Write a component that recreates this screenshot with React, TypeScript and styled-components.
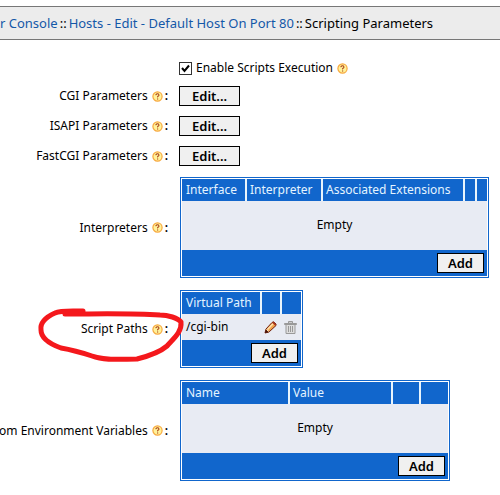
import React from "react";
import styled, { createGlobalStyle } from "styled-components";

const blue = "#1166cc";

const GlobalStyle = createGlobalStyle`
  * { box-sizing: border-box; }
  body {
    margin: 0;
    background: #fff;
    color: #000;
    font: 12px/16px "Noto Sans", "Open Sans", sans-serif;
    overflow: hidden;
  }
`;

const Page = styled.div`
  padding-top: 6px;
`;

const Breadcrumbs = styled.nav`
  display: flex;
  gap: 2px;
  padding: 8px 0;
  border-top: 1px solid #777;
  border-bottom: 1px solid #777;
  background: #ececec;
  font-size: 13px;
  white-space: nowrap;
`;

const Crumb = styled.a`
  color: #1458a8;
  text-decoration: none;
`;

const Form = styled.form`
  display: flex;
  flex-direction: column;
  gap: 11px;
  padding-top: 20px;
`;

const Group = styled.div<{ $gap: number }>`
  display: flex;
  flex-direction: column;
  gap: ${(p) => p.$gap}px;
`;

const Row = styled.div<{ $indent: number }>`
  display: grid;
  grid-template-columns: 168px 1fr;
  column-gap: ${(p) => p.$indent}px;
  align-items: center;
  justify-items: start;
`;

const LabelCell = styled.div`
  position: relative;
  display: flex;
  align-items: center;
  align-self: stretch;
  justify-self: stretch;
  justify-content: flex-end;
  gap: 4px;
  white-space: nowrap;
`;

const Colon = styled.span`
  font-weight: 600;
  margin-left: -2px;
`;

const CheckLine = styled.div`
  display: flex;
  align-items: center;
  gap: 4px;
  grid-column: 2;
`;

const Checkbox = styled.input`
  appearance: none;
  width: 13px;
  height: 13px;
  margin: 0;
  border: 1px solid #333;
  background: #fff
    url("data:image/svg+xml,%3Csvg xmlns='http://www.w3.org/2000/svg' viewBox='0 0 11 11'%3E%3Cpath d='M2 5l2.5 3L9 2.5' fill='none' stroke='black' stroke-width='2'/%3E%3C/svg%3E");
`;

const Button = styled.button<{ $pad?: number }>`
  height: 20px;
  padding: 0 ${(p) => p.$pad ?? 10}px;
  border: 1px solid #000;
  border-radius: 0;
  background: #f0f0f0;
  color: #000;
  font: 600 13px/16px "Noto Sans", "Open Sans", sans-serif;
`;

const Table = styled.table`
  padding: 1px;
  border: 1px solid ${blue};
  border-spacing: 0;
  table-layout: fixed;
  width: min-content;
`;

const Head = styled.th<{ $width: number }>`
  width: ${(p) => p.$width}px;
  height: 22px;
  padding: 3px 0 3px 4px;
  background: ${blue};
  color: #e4f4ff;
  font-weight: 400;
  text-align: left;
  white-space: nowrap;

  & + & {
    padding-left: 3px;
    border-left: 2px solid #e8f4fc;
  }
`;

const EmptyCell = styled.td`
  padding: 16px 0 17px;
  background: #e8ebf3;
  text-align: center;
`;

const Cell = styled.td`
  height: 26px;
  padding: 0 0 0 4px;
  background: #e8ebf3;
`;

const FootCell = styled.td`
  padding: 3px;
  background: ${blue};
  text-align: right;

  ${Button} {
    display: block;
    margin-left: auto;
  }
`;

const IconButton = styled.button`
  display: block;
  padding: 0;
  border: 0;
  background: none;
`;

const HelpButton = styled(IconButton)`
  height: 11px;
`;

const Marker = styled.svg`
  position: absolute;
  z-index: 1;
  top: 0;
  left: 0;
  pointer-events: none;
`;

const Help = () => (
  <HelpButton type="button" aria-label="Help">
    <svg width="11" height="11" viewBox="0 0 11 11" display="block">
      <circle cx="5.5" cy="5.5" r="4.6" fill="#fff29a" stroke="#f7a83d" strokeWidth="1.2" />
      <path d="M3.8 4.2V3.5H4.5V2.8H6.5V3.5H7V4.7H6.3V5.4H5.5V6.4" fill="none" stroke="#a93c18" strokeWidth="1" />
      <path d="M5 7.4h1.2v1.2H5z" fill="#a93c18" />
    </svg>
  </HelpButton>
);

const Pencil = () => (
  <svg width="13" height="13" viewBox="0 0 13 13" display="block">
    <path d="M1 12l1-4 6-6.5 1.5-.7L12 3v1.5L5 11z" fill="#f3a34c" stroke="#70200c" />
    <path d="M3.5 8.5L9 2.7" stroke="#ffe3ae" strokeWidth="1.5" />
    <path d="M8.2 1.7l1.3-.9L12 3l-.7 1.8z" fill="#a8341f" />
    <path d="M1 12l1-3.5L4.5 11z" fill="#401008" />
    <path d="M2.6 8.4L4.7 10.5" stroke="#fff0ce" />
  </svg>
);

const Trash = () => (
  <svg width="13" height="13" viewBox="0 0 13 13" display="block" fill="none" stroke="#999">
    <path d="M4.5 2V.5h4V2M.5 3.5v-1h12v1z" fill="#ccc" />
    <path d="M2 4v8.5h9V4" fill="#ddd" />
    <path d="M4.5 5v6M6.5 5v6M8.5 5v6" />
  </svg>
);

const Label = ({ text, children }: { text: string; children?: React.ReactNode }) => (
  <LabelCell>
    <span>{text}</span>
    <Help />
    <Colon>:</Colon>
    {children}
  </LabelCell>
);

type Column = [title: string, width: number];

const ListTable = ({ label, columns, children }: { label: string; columns: Column[]; children?: React.ReactNode }) => (
  <Table aria-label={label}>
    <thead>
      <tr>
        {columns.map(([title, width], i) => (
          <Head key={i} $width={width}>{title}</Head>
        ))}
      </tr>
    </thead>
    <tbody>
      {children ?? (
        <tr>
          <EmptyCell colSpan={columns.length}>Empty</EmptyCell>
        </tr>
      )}
    </tbody>
    <tfoot>
      <tr>
        <FootCell colSpan={columns.length}>
          <Button type="button">Add</Button>
        </FootCell>
      </tr>
    </tfoot>
  </Table>
);

const interpreterColumns: Column[] = [["Interface", 63], ["Interpreter", 76], ["Associated Extensions", 142], ["", 12], ["", 12]];
const pathColumns: Column[] = [["Virtual Path", 78], ["", 20], ["", 21]];
const variableColumns: Column[] = [["Name", 106], ["Value", 103], ["", 28], ["", 29]];

export default function App() {
  return (
    <Page>
      <GlobalStyle />
      <Breadcrumbs aria-label="Breadcrumb">
        <Crumb href="#console">r Console</Crumb>
        <span>::</span>
        <Crumb href="#host">Hosts - Edit - Default Host On Port 80</Crumb>
        <span>::</span>
        <span>Scripting Parameters</span>
      </Breadcrumbs>
      <Form>
        <Group $gap={10}>
          <Row $indent={11}>
            <CheckLine>
              <Checkbox id="scripts" type="checkbox" defaultChecked />
              <label htmlFor="scripts">Enable Scripts Execution</label>
              <Help />
            </CheckLine>
          </Row>
          {["CGI Parameters", "ISAPI Parameters", "FastCGI Parameters"].map((text) => (
            <Row key={text} $indent={11}>
              <Label text={text} />
              <Button type="button" $pad={12} aria-label={`Edit ${text}`}>Edit...</Button>
            </Row>
          ))}
        </Group>
        <Group $gap={12}>
          <Row $indent={12}>
            <Label text="Interpreters" />
            <ListTable label="Interpreters" columns={interpreterColumns} />
          </Row>
          <Row $indent={12}>
            <Label text="Script Paths">
              <Marker width="190" height="78" viewBox="0 0 190 78" fill="none" stroke="#f4181c" strokeWidth="5" strokeLinecap="round" strokeLinejoin="round">
                <path d="M83 21C73 21 61 20 55 23C46 27 40 33 41 40C41 49 50 54 61 58C73 60 83 63 92 66C105 71 122 69 137 69C149 66 160 62 167 56C174 48 182 42 181 32C178 28 168 25 160 25C130 23 96 24 65 24" />
              </Marker>
            </Label>
            <ListTable label="Script Paths" columns={pathColumns}>
              <tr>
                <Cell>/cgi-bin</Cell>
                <Cell>
                  <IconButton type="button" aria-label="Edit path"><Pencil /></IconButton>
                </Cell>
                <Cell>
                  <IconButton type="button" aria-label="Delete path"><Trash /></IconButton>
                </Cell>
              </tr>
            </ListTable>
          </Row>
          <Row $indent={12}>
            <Label text="om Environment Variables" />
            <ListTable label="Environment Variables" columns={variableColumns} />
          </Row>
        </Group>
      </Form>
    </Page>
  );
}
